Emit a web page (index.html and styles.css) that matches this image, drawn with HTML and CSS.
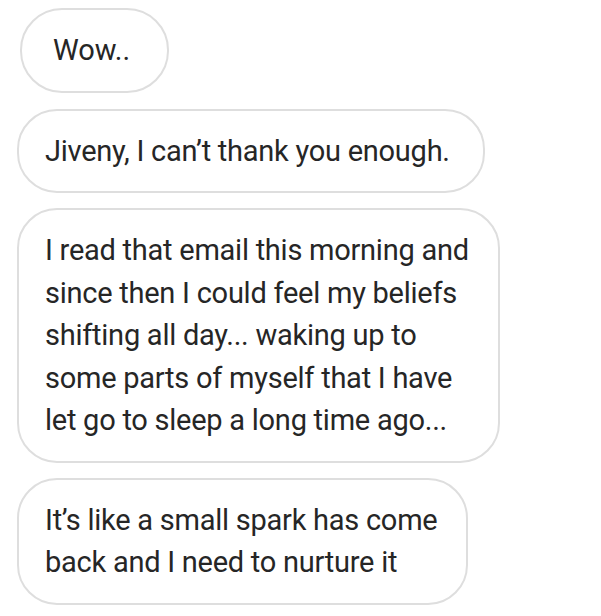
FILE: index.html
```html
<!DOCTYPE html>
<html lang="en">

<head>
  <meta charset="UTF-8">
  <meta name="viewport" content="width=device-width, initial-scale=1.0">
  <title>Messages</title>
  <link rel="stylesheet" href="styles.css">
</head>

<body>
  <div class="thread">
    <div class="bubble bubble-short">Wow..</div>
    <div class="bubble bubble-line">Jiveny, I can’t thank you enough.</div>
    <div class="bubble">I read that email this morning and<br>since then I could feel my beliefs<br>shifting all day... waking up to<br>some parts of myself that I have<br>let go to sleep a long time ago...</div>
    <div class="bubble">It’s like a small spark has come<br>back and I need to nurture it</div>
  </div>
</body>

</html>
```

FILE: styles.css
```css
* {
  margin: 0;
  padding: 0;
  box-sizing: border-box;
}

body {
  background-color: #fff;
  color: #262626;
  font-family: Roboto, "Noto Sans", sans-serif;
}

.thread {
  display: flex;
  flex-direction: column;
  align-items: flex-start;
  gap: 15px;
  padding: 8px 0 0 17px;
}

.bubble {
  border: 2px solid #dedede;
  border-radius: 40px;
  padding: 19px 29px 19px 26px;
  font-size: 29px;
  line-height: 42.5px;
  letter-spacing: -0.25px;
  white-space: nowrap;
}

.bubble-short {
  margin-left: 3px;
  padding-left: 31px;
  padding-right: 37px;
  border-radius: 42px;
  letter-spacing: 0;
}

.bubble-line {
  margin-top: 1px;
  padding-right: 33px;
}
```
